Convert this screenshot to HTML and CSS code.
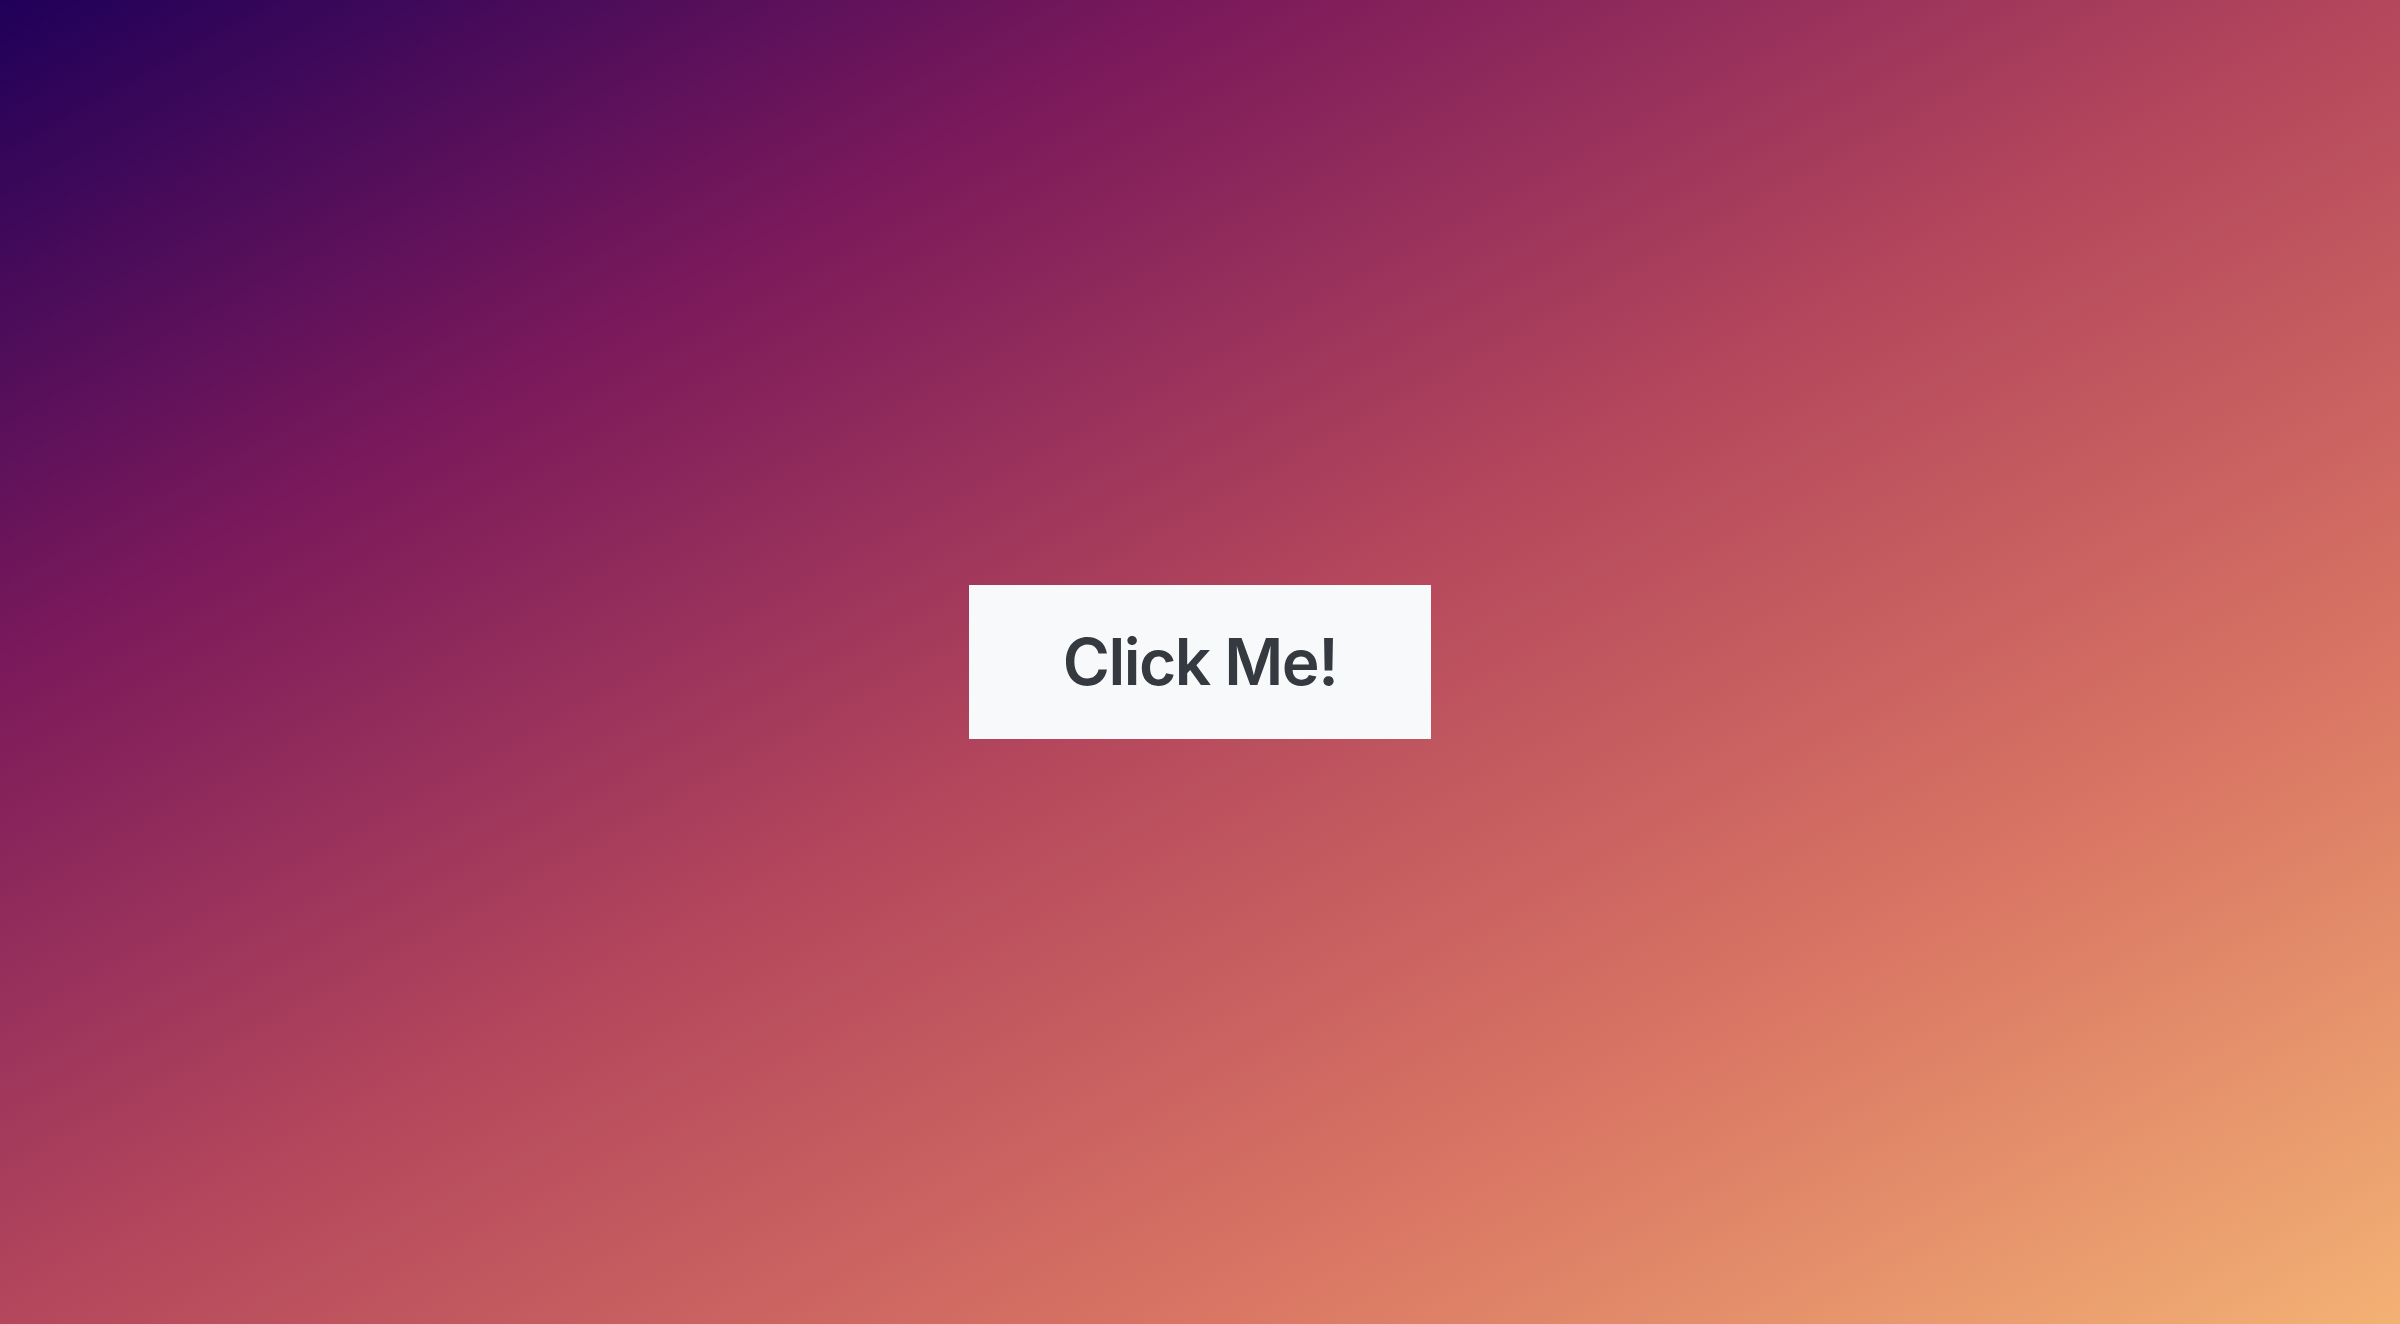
FILE: index.html
```html
<!DOCTYPE html>
<html lang="en">
<head>
<meta charset="utf-8">
<title>Click Me</title>
<link rel="stylesheet" href="styles.css">
</head>
<body>
<main class="stage">
  <button class="btn" type="button">Click Me!</button>
</main>
</body>
</html>
```

FILE: styles.css
```css
html, body {
  margin: 0;
  padding: 0;
  height: 100%;
}
body {
  font-family: Inter, "Liberation Sans", sans-serif;
}
.stage {
  height: 100vh;
  display: flex;
  align-items: center;
  justify-content: center;
  background: linear-gradient(to bottom right, #1f0059 0%, #7a195b 25%, #b4475c 50%, #d97664 75%, #f3b174 100%);
}
.btn {
  font-family: Inter, "Liberation Sans", sans-serif;
  font-size: 64px;
  font-weight: 600;
  line-height: 74px;
  letter-spacing: -1.5px;
  color: #343a40;
  background: #f8f9fa;
  border: 0;
  border-radius: 0;
  width: 462px;
  height: 154px;
  padding: 0;
  cursor: pointer;
}
```
